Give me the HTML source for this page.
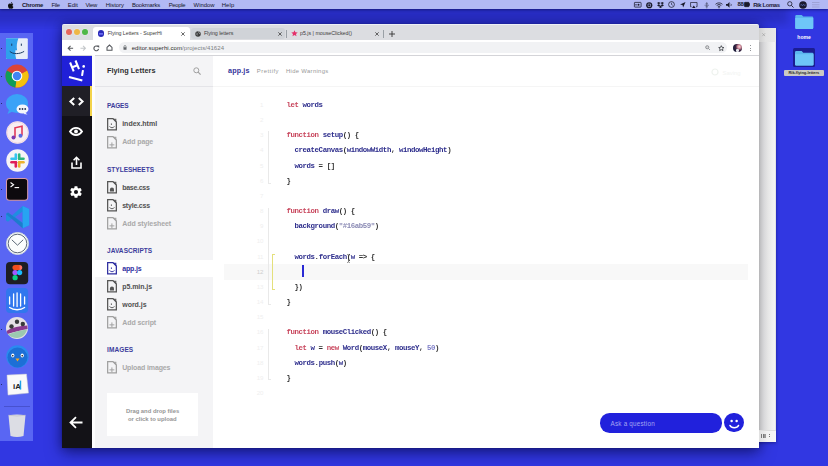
<!DOCTYPE html>
<html><head><meta charset="utf-8">
<style>
*{margin:0;padding:0;box-sizing:border-box}
html,body{width:828px;height:466px;overflow:hidden}
body{position:relative;background:#3137e2;font-family:"Liberation Sans",sans-serif}
.a{position:absolute}
.t{position:absolute;white-space:nowrap}
svg{position:absolute;overflow:visible}
.mb{left:0;top:0;width:828px;height:9px;background:#b2b9f4;box-shadow:0 1px 3px rgba(0,0,50,.5)}
.mt{top:0;font-size:6.2px;line-height:9px;color:#15152a}
.dock{left:0;top:33px;width:33px;height:408px;background:#5966f3}
.win2{left:745px;top:27.5px;width:30.7px;height:414.4px;background:linear-gradient(90deg,#b4b4b6 0,#b4b4b6 14px,#c6c6c8 16px,#d8d8da 19px,#e6e6e6 23px,#efefef 27px,#f4f4f4 30px,#dcdcdc 30.7px);box-shadow:0 1px 3px rgba(0,0,40,.4)}
.winsh{left:62px;top:24px;width:697px;height:424px;border-radius:2px;box-shadow:0 5px 16px rgba(0,0,50,.5),0 0 10px rgba(0,0,50,.3),0 0 1px rgba(0,0,0,.5)}
.tabs{left:62px;top:24px;width:697px;height:16px;background:#dcdde1;border-top:.8px solid #eef0f6;border-radius:2px 2px 0 0}
.tb{left:62px;top:40px;width:697px;height:15px;background:#fff}
.nav{left:62px;top:55px;width:30px;height:393px;background:#131217}
.logo{left:62px;top:55px;width:30px;height:31px;background:#2020d8}
.files{left:92px;top:55px;width:121.2px;height:393px;background:#f4f4f6}
.ed{left:213.2px;top:55px;width:545.8px;height:393px;background:#fff}
.mono{position:absolute;font-family:"Liberation Mono",monospace;font-weight:bold;font-size:7.4px;letter-spacing:-.42px;transform:scaleY(1.06);transform-origin:0 5px;line-height:10px;white-space:pre;color:#333}
.k{color:#c8455c}.v{color:#2d2d8c}.s{color:#8a8ab4}.n{color:#7f7fc8}
.ln{position:absolute;left:248.3px;width:15px;text-align:right;font-family:"Liberation Sans",sans-serif;font-size:6.2px;line-height:10px;color:#efefef;letter-spacing:-.2px}
.sec{position:absolute;font-size:5.9px;line-height:8px;font-weight:bold;color:#3c3c9c;letter-spacing:.25px;white-space:nowrap}
.fn{position:absolute;font-size:7px;line-height:10px;font-weight:bold;color:#4e4e4e;white-space:nowrap}
.fa{color:#a8a8a8}
.tabt{position:absolute;font-size:5.3px;line-height:8px;color:#3a3a3a;white-space:nowrap}
</style></head><body>

<div class="a mb"></div>
<svg style="left:8.3px;top:1.6px" width="5.6" height="6.6" viewBox="0 0 14 17"><path d="M11.6 9c0-2.2 1.8-3.2 1.9-3.3-1-1.5-2.6-1.7-3.2-1.7-1.4-.1-2.6.8-3.3.8-.7 0-1.7-.8-2.8-.8C2.7 4 1.3 4.9.5 6.3c-1.5 2.7-.4 6.7 1.1 8.9.7 1.1 1.6 2.3 2.7 2.2 1.1 0 1.5-.7 2.8-.7 1.3 0 1.7.7 2.8.7 1.2 0 1.9-1.100 2.6-2.100.8-1.2 1.2-2.4 1.2-2.5 0 0-2.3-.9-2.3-3.5zM9.5 2.7C10.1 2 10.5 1 10.4 0 9.5 0 8.5.6 7.9 1.3 7.3 1.9 6.8 2.9 7 3.9c1 .1 1.9-.5 2.5-1.2z" fill="#111"/></svg>
<div class="t" style="left:21.90px;top:-0.40px;font-size:5.9px;line-height:10px;letter-spacing:-0.160px;color:#15152a;font-weight:bold;">Chrome</div>
<div class="t" style="left:51.40px;top:-0.40px;font-size:5.9px;line-height:10px;letter-spacing:-0.300px;color:#15152a;">File</div>
<div class="t" style="left:67.80px;top:-0.40px;font-size:5.9px;line-height:10px;letter-spacing:0.008px;color:#15152a;">Edit</div>
<div class="t" style="left:85.50px;top:-0.40px;font-size:5.9px;line-height:10px;letter-spacing:-0.262px;color:#15152a;">View</div>
<div class="t" style="left:105.80px;top:-0.40px;font-size:5.9px;line-height:10px;letter-spacing:-0.025px;color:#15152a;">History</div>
<div class="t" style="left:131.90px;top:-0.40px;font-size:5.9px;line-height:10px;letter-spacing:-0.137px;color:#15152a;">Bookmarks</div>
<div class="t" style="left:168.70px;top:-0.40px;font-size:5.9px;line-height:10px;letter-spacing:-0.316px;color:#15152a;">People</div>
<div class="t" style="left:193.60px;top:-0.40px;font-size:5.9px;line-height:10px;letter-spacing:-0.021px;color:#15152a;">Window</div>
<div class="t" style="left:221.70px;top:-0.40px;font-size:5.9px;line-height:10px;letter-spacing:0.125px;color:#15152a;">Help</div>
<div class="t" style="left:753.20px;top:-0.40px;font-size:5.9px;line-height:10px;letter-spacing:-0.378px;color:#22223a;font-weight:bold;">Rik Lomas</div>
<svg style="left:633.5px;top:1.8px" width="7.5" height="5.5" viewBox="0 0 15 11"><rect x=".8" y=".8" width="13.4" height="9.4" rx="1" stroke="#1a1a2a" stroke-width="1.5" fill="none"/><circle cx="9" cy="5.5" r="2" fill="#1a1a2a"/><rect x="3" y="4" width="2" height="3" fill="#1a1a2a"/></svg>
<svg style="left:646px;top:1.5px" width="6.5" height="6.5" viewBox="0 0 13 13"><circle cx="6.5" cy="6.5" r="6.2" fill="#1a1a2a"/><path d="M4 4h5v5H4z" stroke="#b2b9f4" stroke-width="1.2" fill="none"/></svg>
<svg style="left:656.8px;top:1.5px" width="7" height="6.5" viewBox="0 0 14 13"><path d="M3.5 0L7 2.2 3.5 4.4 0 2.2zM10.5 0L14 2.2 10.5 4.4 7 2.2zM3.5 4.4L7 6.6 3.5 8.8 0 6.6zM10.5 4.4L14 6.6 10.5 8.8 7 6.6zM3.5 9.8L7 7.6l3.5 2.2L7 12z" fill="#1a1a2a"/></svg>
<svg style="left:668px;top:1.3px" width="7" height="7" viewBox="0 0 14 14"><circle cx="7" cy="7" r="5.8" stroke="#1a1a2a" stroke-width="1.5" fill="none"/><path d="M7 3.5V7l2.5 1.5" stroke="#1a1a2a" stroke-width="1.3" fill="none"/></svg>
<svg style="left:679.5px;top:2px" width="5.5" height="5.5" viewBox="0 0 11 11"><path d="M11 0L0 4.8l5 1.2L6.2 11z" fill="#1a1a2a"/></svg>
<svg style="left:689.8px;top:1.5px" width="7.6" height="6.5" viewBox="0 0 15 13"><path d="M3 9.5H1V1h13v8.5h-2" stroke="#1a1a2a" stroke-width="1.4" fill="none"/><path d="M7.5 7L11 12H4z" fill="#1a1a2a"/></svg>
<svg style="left:704px;top:1.5px" width="5.5" height="6.5" viewBox="0 0 11 13"><path d="M5.5 0v13M1 6.5h9M3 3.5h5M3 9.5h5" stroke="#1a1a2a" stroke-width="1" fill="none" opacity=".8"/></svg>
<svg style="left:714.8px;top:1.5px" width="8" height="6.2" viewBox="0 0 16 12.4"><path d="M1 4.6a10 10 0 0 1 14 0M3.4 7a6.6 6.6 0 0 1 9.2 0M5.7 9.3a3.3 3.3 0 0 1 4.6 0" stroke="#1a1a2a" stroke-width="1.6" fill="none"/><circle cx="8" cy="11.3" r="1.1" fill="#1a1a2a"/></svg>
<svg style="left:726px;top:1.8px" width="7.5" height="5.8" viewBox="0 0 15 11.5"><path d="M0 4h3l4-4v11.5l-4-4H0z" fill="#1a1a2a"/><path d="M9.5 3.5a3 3 0 0 1 0 4.5" stroke="#1a1a2a" stroke-width="1.3" fill="none"/></svg>
<div class="t" style="left:737.5px;top:0;font-size:6px;line-height:9px;font-weight:bold;color:#1a1a2a;letter-spacing:-.3px">88</div>
<svg style="left:744px;top:2px" width="6" height="5" viewBox="0 0 12 10"><rect x=".7" y=".7" width="9.6" height="8.6" rx="1.5" stroke="#1a1a2a" stroke-width="1.4" fill="#1a1a2a"/><rect x="10.5" y="3" width="1.5" height="4" fill="#1a1a2a"/></svg>
<svg style="left:786.5px;top:1.3px" width="7" height="7" viewBox="0 0 14 14"><circle cx="5.6" cy="5.6" r="4.3" stroke="#1a1a2a" stroke-width="1.6" fill="none"/><path d="M8.8 8.8L13 13" stroke="#1a1a2a" stroke-width="1.8"/></svg>
<svg style="left:799px;top:0.8px" width="8" height="8" viewBox="0 0 16 16"><circle cx="8" cy="8" r="7.6" fill="#1a1a2e"/><path d="M3 8c2-3 3 3 5 0s3 3 5 0" stroke="#7a9aff" stroke-width="1.3" fill="none"/></svg>
<svg style="left:811.5px;top:1.8px" width="7.5" height="5.5" viewBox="0 0 15 11"><path d="M0 1h15M0 5.5h15M0 10h15" stroke="#9598c8" stroke-width="1.4"/></svg>
<div class="a dock"></div>
<svg style="left:6.2px;top:37.8px" width="21.8" height="21.2" viewBox="0 0 22 21"><rect x="0" y="0" width="22" height="21" rx="1" fill="#e8eef8"/><path d="M1 0H12.5C11 4 10.5 8 11.2 12.2H9.5C9.2 15.5 9.6 18.5 10.3 21H1Q0 21 0 20V1Q0 0 1 0z" fill="#2fa0ec"/><path d="M5.8 5.5v2.2M15.5 5.5v2.2" stroke="#1a3a60" stroke-width="1"/><path d="M3.8 13.3c3 3 10 3 14.5 0" stroke="#1a3a60" stroke-width="1" fill="none"/></svg>
<div class="a" style="left:.9px;top:47.9px;width:1.2px;height:1.2px;border-radius:50%;background:#111a40"></div>
<svg style="left:5.4px;top:64.3px" width="24" height="24" viewBox="0 0 24 24"><circle cx="12" cy="12" r="11.5" fill="#db4437"/><path d="M12 12L1.9 6.5A11.5 11.5 0 0 0 10.5 23.4z" fill="#0f9d58"/><path d="M12 12L10.5 23.4A11.5 11.5 0 0 0 22.1 6.5z" fill="#f4c20d"/><path d="M12 12L22.1 6.5H12z" fill="#db4437"/><circle cx="12" cy="12" r="5.3" fill="#fff"/><circle cx="12" cy="12" r="4.2" fill="#4285f4"/></svg>
<div class="a" style="left:.9px;top:76.2px;width:1.2px;height:1.2px;border-radius:50%;background:#111a40"></div>
<svg style="left:5.5px;top:93.5px" width="22" height="22" viewBox="0 0 22 22"><ellipse cx="11" cy="9.5" rx="11" ry="9.5" fill="#3aa2f7"/><path d="M3 16l-1.5 4 5-2.5z" fill="#3aa2f7"/><ellipse cx="16.5" cy="15" rx="6" ry="4.5" fill="#f4f6fb"/><path d="M19 18.5l2.5 2-4-.6z" fill="#f4f6fb"/><circle cx="13.8" cy="15" r=".9" fill="#2a3550"/><circle cx="16.5" cy="15" r=".9" fill="#2a3550"/><circle cx="19.2" cy="15" r=".9" fill="#2a3550"/></svg>
<div class="a" style="left:.9px;top:103.1px;width:1.2px;height:1.2px;border-radius:50%;background:#111a40"></div>
<svg style="left:5.5px;top:121.4px" width="23" height="23" viewBox="0 0 23 23"><circle cx="11.5" cy="11.5" r="11.2" fill="#f7eef2"/><circle cx="11.5" cy="11.5" r="10.5" fill="none" stroke="#f0d0da" stroke-width=".8"/><path d="M9 16.5V6.8l7-1.6v9.3" stroke="#e03a5a" stroke-width="1.6" fill="none"/><circle cx="7.5" cy="16.5" r="2" fill="#7a3ab0"/><circle cx="14.5" cy="14.8" r="2" fill="#5a6adf"/></svg>
<svg style="left:5.5px;top:148.8px" width="23" height="23" viewBox="0 0 23 23"><circle cx="11.5" cy="11.5" r="11.2" fill="#f6f4f6"/><g stroke-width="2.6" stroke-linecap="round"><path d="M9.8 5.5v4.3" stroke="#36c5f0"/><path d="M5.5 9.8h4.3" stroke="#36c5f0"/><path d="M13.2 5.5v4.3" stroke="#2eb67d"/><path d="M17.5 9.8h-4.3" stroke="#2eb67d"/><path d="M13.2 17.5v-4.3" stroke="#ecb22e"/><path d="M17.5 13.2h-4.3" stroke="#ecb22e"/><path d="M9.8 17.5v-4.3" stroke="#e01e5a"/><path d="M5.5 13.2h4.3" stroke="#e01e5a"/></g></svg>
<svg style="left:5.8px;top:178.1px" width="22.2" height="22.8" viewBox="0 0 22 22.6"><rect x=".5" y=".5" width="21" height="21.6" rx="3" fill="#0d0a0e" stroke="#d89aa8" stroke-width="1"/><path d="M4.5 4.5l3 2.2-3 2.2" stroke="#fff" stroke-width="1.1" fill="none"/><path d="M8.5 9.5h4.5" stroke="#fff" stroke-width="1.1"/></svg>
<div class="a" style="left:.9px;top:188.7px;width:1.2px;height:1.2px;border-radius:50%;background:#111a40"></div>
<svg style="left:5.8px;top:205.7px" width="23.2" height="22.2" viewBox="0 0 23 22"><path d="M16.5 0L23 3V19L16.5 22L6 12.5 2 15.5 0 14.3V7.7L2 6.5 6 9.5z" fill="#1f8ee0"/><path d="M16.5 5.5L9 11l7.5 5.5z" fill="#5966f3"/><path d="M16.5 0L23 3V19L16.5 22z" fill="#27a4f2"/><path d="M2 6.5L16.5 17V22L0 8z" fill="#1a6fc0" opacity=".6"/></svg>
<div class="a" style="left:.9px;top:215.7px;width:1.2px;height:1.2px;border-radius:50%;background:#111a40"></div>
<svg style="left:5.5px;top:231.9px" width="23" height="23" viewBox="0 0 23 23"><circle cx="11.5" cy="11.5" r="11" fill="#fbfdfd" stroke="#cdd6dc" stroke-width="1"/><circle cx="11.5" cy="11.5" r="9.3" fill="none" stroke="#5d6a78" stroke-width="1"/><path d="M5.8 7.8L11.5 13.2 17.2 7.8" stroke="#5d6a78" stroke-width="1" fill="none"/></svg>
<svg style="left:5.8px;top:261.8px" width="22.2" height="22.2" viewBox="0 0 22 22"><rect width="22" height="22" rx="4" fill="#1e1e24"/><circle cx="9" cy="5.5" r="2.6" fill="#f24e1e"/><circle cx="13.5" cy="5.5" r="2.6" fill="#ff7262"/><path d="M9 2.9h4.5v5.2H9z" fill="#f24e1e"/><circle cx="9" cy="10.5" r="2.6" fill="#a259ff"/><circle cx="13.5" cy="10.5" r="2.6" fill="#1abcfe"/><circle cx="9" cy="15.5" r="2.6" fill="#0acf83"/></svg>
<svg style="left:5.8px;top:287.8px" width="22.2" height="25" viewBox="0 0 22 25"><rect width="22" height="25" rx="4" fill="#3177ee"/><g stroke="#fff" stroke-width="1.3" stroke-linecap="round"><path d="M3.5 9v7M7.5 6v12M11 5v13.5M14.5 6v12M18.5 9v7"/><path d="M3.5 19.5c4 3 11 3 15 0" fill="none"/></g></svg>
<svg style="left:6px;top:316.5px" width="22" height="22" viewBox="0 0 22 22"><circle cx="11" cy="11" r="11" fill="#e6e1e6"/><path d="M0.6 14C6 10 14 9 21.4 8.5L21.6 12C15 13 8 15 1.5 17z" fill="#8a3a8f"/><path d="M2 17.5C8 15 15 13 21 12.5 20 17 16 21 11 21 7 21 4 19.5 2 17.5z" fill="#9cc8b0"/><circle cx="11" cy="4.8" r="2.2" fill="#3a3a3a"/><circle cx="16.8" cy="7" r="2.2" fill="#3a3a3a"/><circle cx="5.5" cy="9.5" r="2.2" fill="#3a3a3a"/></svg>
<div class="a" style="left:.9px;top:328.9px;width:1.2px;height:1.2px;border-radius:50%;background:#111a40"></div>
<svg style="left:5.5px;top:345px" width="23" height="23" viewBox="0 0 23 23"><circle cx="11.5" cy="11.5" r="11.2" fill="#2a8af0"/><circle cx="11.5" cy="12.5" r="10" fill="#1d6fd6"/><ellipse cx="6.8" cy="10.5" rx="1.6" ry="2" fill="#fff"/><ellipse cx="16.2" cy="10.5" rx="1.6" ry="2" fill="#fff"/><circle cx="6.8" cy="10.8" r=".8" fill="#111"/><circle cx="16.2" cy="10.8" r=".8" fill="#111"/><path d="M9.5 13.5h4l-2 3z" fill="#f5a623"/></svg>
<svg style="left:5.4px;top:373.9px" width="24" height="21.2" viewBox="0 0 24 21"><path d="M2 1L21.5 0 23.5 19 3 21z" fill="#fafafa" stroke="#c8c8d0" stroke-width=".5"/><text x="8" y="14.5" font-family="Liberation Sans" font-weight="bold" font-size="8" fill="#222">iA</text><path d="M15.5 6.5v9" stroke="#1ea0e6" stroke-width="1.4"/></svg>
<div class="a" style="left:.9px;top:384.3px;width:1.2px;height:1.2px;border-radius:50%;background:#111a40"></div>
<div class="a" style="left:3.5px;top:405.5px;width:26px;height:.6px;background:rgba(20,20,100,.25)"></div>
<svg style="left:7.5px;top:414px" width="18" height="23.5" viewBox="0 0 18 23.5"><path d="M.5 1.2Q9-.4 17.5 1.2L15.5 22Q9 24 2.5 22z" fill="#dcdde4"/><path d="M.5 1.2Q9 2.8 17.5 1.2" stroke="#b8b9c2" stroke-width=".6" fill="none"/></svg>
<div class="a" style="left:0;top:9px;width:828px;height:20px;overflow:hidden"><div class="a" style="left:-10px;top:-4px;width:798px;height:19px;background:rgba(0,0,50,.17);filter:blur(4px)"></div></div>
<div class="a winsh"></div>
<div class="a win2"></div>
<div class="a" style="left:759px;top:27.5px;width:16.7px;height:14.5px;background:linear-gradient(90deg,#cfcfcf,#e2e2e2 40%,#e8e8e8)"></div>
<svg style="left:762.3px;top:33px" width="3.4" height="3.4" viewBox="0 0 4 4"><path d="M.3.3L3.7 3.7M3.7.3L.3 3.7" stroke="#999" stroke-width=".7"/></svg>
<div class="a" style="left:759px;top:429.8px;width:16.7px;height:12px;background:linear-gradient(90deg,#e0e0e0,#f2f2f2 50%,#f6f6f6);border-top:.5px solid #ddd"></div>
<div class="a" style="left:761px;top:433.5px;width:1px;height:4px;background:#777"></div><div class="a" style="left:762.6px;top:433.5px;width:1px;height:4px;background:#777"></div><div class="a" style="left:764.2px;top:433.5px;width:1.6px;height:4px;background:#999"></div><div class="a" style="left:768.5px;top:434.3px;width:.8px;height:.8px;background:#777"></div><div class="a" style="left:768.5px;top:436.3px;width:.8px;height:.8px;background:#777"></div>
<div class="a tabs"></div>
<div class="a tb"></div>
<div class="a nav"></div>
<div class="a logo"></div>
<div class="a files"></div>
<div class="a ed"></div>
<div class="a" style="left:66.00px;top:29.00px;width:5.8px;height:5.8px;border-radius:50%;background:#e5675c;box-shadow:0 0 0 .5px rgba(255,255,255,.35)"></div>
<div class="a" style="left:74.40px;top:29.00px;width:5.8px;height:5.8px;border-radius:50%;background:#eeb746;box-shadow:0 0 0 .5px rgba(255,255,255,.35)"></div>
<div class="a" style="left:82.30px;top:29.00px;width:5.8px;height:5.8px;border-radius:50%;background:#4fb848;box-shadow:0 0 0 .5px rgba(255,255,255,.35)"></div>
<div class="a" style="left:93px;top:27px;width:97px;height:13px;background:#fff;border-radius:3px 3px 0 0"></div>
<div class="a" style="left:97.8px;top:30.4px;width:6.4px;height:6.4px;border-radius:50%;background:#2a2ab8"></div>
<div class="a" style="left:99.2px;top:32.8px;width:3.6px;height:.6px;background:#6a6af0"></div><div class="a" style="left:99.2px;top:34.3px;width:3.6px;height:.6px;background:#5a5ae0"></div>
<div class="t" style="left:107.70px;top:28.40px;font-size:5.3px;line-height:10px;letter-spacing:-0.060px;color:#3c3c3c;">Flying Letters - SuperHi</div>
<div class="a" style="left:191px;top:27.5px;width:94px;height:11.5px;background:#d0d3d8;border-radius:3px"></div>
<svg style="left:195.2px;top:30.6px" width="6" height="6" viewBox="0 0 12 12"><circle cx="6" cy="6" r="5.5" fill="#3c3c3c"/><path d="M3 3.5c1 .5 1.5 1.5 1 2.5s.5 2 1.5 2.5M7 1.2c-.5 1 .3 1.8 1.2 2s1.2 1.2.8 2.2" stroke="#d0d3d8" stroke-width="1.3" fill="none"/></svg>
<div class="t" style="left:203.90px;top:28.40px;font-size:5.3px;line-height:10px;letter-spacing:-0.042px;color:#3c3c3c;">Flying letters</div>
<div class="a" style="left:286px;top:29.5px;width:.8px;height:8px;background:#9aa0a6"></div>
<svg style="left:290.5px;top:30.3px" width="7" height="7" viewBox="0 0 24 24"><path d="M12 1l3.2 7.1 7.8.7-5.9 5.1 1.8 7.6L12 17.5 5.1 21.5l1.8-7.6L1 8.8l7.8-.7z" fill="#e5306a"/></svg>
<div class="t" style="left:300.00px;top:28.40px;font-size:5.3px;line-height:10px;letter-spacing:-0.016px;color:#3c3c3c;">p5.js | mouseClicked()</div>
<div class="a" style="left:383px;top:29.5px;width:.8px;height:8px;background:#9aa0a6"></div>
<svg style="left:181.2px;top:31.5px" width="4" height="4" viewBox="0 0 4 4"><path d="M.3.3L3.7 3.7M3.7.3L.3 3.7" stroke="#444" stroke-width=".8"/></svg>
<svg style="left:278.0px;top:31.5px" width="4" height="4" viewBox="0 0 4 4"><path d="M.3.3L3.7 3.7M3.7.3L.3 3.7" stroke="#444" stroke-width=".8"/></svg>
<svg style="left:375.0px;top:31.5px" width="4" height="4" viewBox="0 0 4 4"><path d="M.3.3L3.7 3.7M3.7.3L.3 3.7" stroke="#444" stroke-width=".8"/></svg>
<svg style="left:389px;top:30.5px" width="6" height="6" viewBox="0 0 6 6"><path d="M3 0V6M0 3H6" stroke="#333" stroke-width=".9"/></svg>
<svg style="left:67.3px;top:44.6px" width="6.6" height="6.6" viewBox="0 0 14 14"><path d="M13 7H2.5M7.5 2L2.5 7l5 5" stroke="#54575c" stroke-width="2.3" fill="none"/></svg>
<svg style="left:80.3px;top:44.6px" width="6.6" height="6.6" viewBox="0 0 14 14"><path d="M1 7h10.5M6.5 2l5 5-5 5" stroke="#c4c7ca" stroke-width="2.3" fill="none"/></svg>
<svg style="left:93px;top:44.6px" width="6.6" height="6.6" viewBox="0 0 14 14"><path d="M11.8 8.3A5 5 0 1 1 10.2 3.3" stroke="#54575c" stroke-width="2.4" fill="none"/><path d="M7.8.8h5.4v5.4z" fill="#54575c"/></svg>
<svg style="left:105.5px;top:44.4px" width="7" height="7" viewBox="0 0 14 14"><path d="M2 6.8L7 2l5 4.8V12.6H2z" stroke="#54575c" stroke-width="2.1" fill="none" stroke-linejoin="miter"/></svg>
<div class="a" style="left:118.8px;top:42px;width:608px;height:10.9px;border-radius:5.45px;background:#f1f2f4"></div>
<svg style="left:123.3px;top:44.6px" width="4" height="5" viewBox="0 0 8 10"><path d="M2 4.5V3a2 2 0 0 1 4 0v1.5" stroke="#5f6368" stroke-width="1.3" fill="none"/><rect x="1" y="4.5" width="6" height="5" rx=".5" fill="#5f6368"/></svg>
<div class="t" style="left:131.70px;top:42.60px;font-size:6.0px;line-height:10px;letter-spacing:0.070px;color:#2a2a2a;">editor.superhi.com<span style="color:#7c7f83">/projects/41624</span></div>
<svg style="left:705.3px;top:45.3px" width="5.4" height="5.4" viewBox="0 0 12 12"><circle cx="5" cy="5" r="3.5" stroke="#8a8d91" stroke-width="2" fill="#d8d8da"/><path d="M7.6 7.6L11 11" stroke="#8a8d91" stroke-width="2"/></svg>
<svg style="left:717.6px;top:44.6px" width="6.6" height="6.6" viewBox="0 0 24 24"><path d="M12 2.5l2.8 6.2 6.7.6-5.1 4.5 1.6 6.6L12 16.9l-6 3.5 1.6-6.6-5.1-4.5 6.7-.6z" stroke="#3c3f44" stroke-width="3" fill="none" stroke-linejoin="round"/></svg>
<div class="a" style="left:733px;top:43.5px;width:8.6px;height:8.6px;border-radius:50%;background:radial-gradient(circle at 70% 35%,#f3dde0 0,#d08a98 22%,#3a2340 45%,#1c1c3a 70%);overflow:hidden"><div class="a" style="left:3.2px;top:5.8px;width:2.4px;height:3px;border-radius:40%;background:#e8e8ee"></div></div>
<div class="a" style="left:749.7px;top:45.4px;width:1px;height:1px;border-radius:50%;background:#6f7378"></div>
<div class="a" style="left:749.7px;top:47.5px;width:1px;height:1px;border-radius:50%;background:#6f7378"></div>
<div class="a" style="left:749.7px;top:49.6px;width:1px;height:1px;border-radius:50%;background:#6f7378"></div>
<div class="a" style="left:62px;top:54.6px;width:697px;height:.6px;background:#d4d4d8"></div>
<div class="a" style="left:62px;top:86px;width:30px;height:30px;background:#201f26"></div>
<div class="a" style="left:89.6px;top:86px;width:2.8px;height:30px;background:#f3d34a"></div>
<div class="a" style="left:92.4px;top:55px;width:3px;height:393px;background:#fdfdfe"></div>
<svg style="left:62px;top:55px" width="30" height="31" viewBox="0 0 30 31"><g stroke="#fff" stroke-width="2.05" stroke-linecap="butt" fill="none"><path d="M8.1 7.5L11.7 16.3M13.5 5.5L17 14.1M9.7 12.5L15.4 10.2"/><path d="M21 15.1L20 20.9" /><path d="M7 22L20.3 25.6"/></g><circle cx="21.7" cy="11.4" r="1.3" fill="#fff"/></svg>
<svg style="left:68.5px;top:96.5px" width="15" height="9" viewBox="0 0 15 9"><path d="M5.2 .9L1.4 4.5 5.2 8.1M9.8 .9l3.8 3.6-3.8 3.6" stroke="#fff" stroke-width="2" fill="none" stroke-linejoin="miter"/></svg>
<svg style="left:68.8px;top:126.5px" width="14" height="9" viewBox="0 0 14 9"><path d="M1 4.5C2.7 1.9 4.6.9 7 .9s4.3 1 6 3.6C11.3 7.1 9.4 8.1 7 8.1S2.7 7.1 1 4.5z" stroke="#fff" stroke-width="1.9" fill="none"/><circle cx="7" cy="4.5" r="1.9" fill="#fff"/></svg>
<svg style="left:70.5px;top:155.5px" width="11" height="13" viewBox="0 0 11 13"><path d="M1 6.5V12H10V6.5" stroke="#fff" stroke-width="1.6" fill="none"/><path d="M5.5 9V1.5M2.6 4.2L5.5 1.3 8.4 4.2" stroke="#fff" stroke-width="1.6" fill="none"/></svg>
<svg style="left:68.8px;top:185px" width="14" height="14" viewBox="0 0 24 24"><path fill="#fff" d="M19.4 13c.04-.3.06-.6.06-1s-.02-.7-.06-1l2.1-1.6c.2-.15.25-.42.12-.64l-2-3.46c-.12-.22-.4-.3-.6-.22l-2.5 1c-.52-.4-1.08-.73-1.7-.98l-.37-2.65A.49.49 0 0 0 14 2h-4c-.25 0-.46.18-.5.42l-.37 2.65c-.62.25-1.18.58-1.7.98l-2.5-1c-.23-.09-.48 0-.6.22l-2 3.46c-.13.22-.07.49.12.64L4.57 11c-.04.32-.07.65-.07 1s.03.68.07 1l-2.11 1.65c-.19.15-.24.42-.12.64l2 3.46c.12.22.39.3.61.22l2.49-1c.52.4 1.08.73 1.69.98l.38 2.65c.03.24.24.42.49.42h4c.25 0 .46-.18.49-.42l.38-2.65c.61-.25 1.17-.59 1.69-.98l2.49 1c.23.09.49 0 .61-.22l2-3.46c.12-.22.07-.49-.12-.64L19.4 13zM12 15.5a3.5 3.5 0 1 1 0-7 3.5 3.5 0 0 1 0 7z"/></svg>
<svg style="left:68.8px;top:416.3px" width="14" height="13" viewBox="0 0 14 13"><path d="M13.5 6.5H1.8M7 1.2L1.5 6.5 7 11.8" stroke="#fff" stroke-width="1.8" fill="none"/></svg>
<div class="a" style="left:95.4px;top:85.8px;width:117.8px;height:.8px;background:#e4e4e8"></div>
<div class="t" style="left:106.90px;top:65.60px;font-size:7.3px;line-height:10px;letter-spacing:0.058px;color:#2f2f2f;font-weight:bold;">Flying Letters</div>
<svg style="left:193px;top:67px" width="8" height="8" viewBox="0 0 8 8"><circle cx="3.3" cy="3.3" r="2.5" stroke="#a0a0a0" stroke-width="1" fill="none"/><path d="M5.2 5.2L7.6 7.6" stroke="#a0a0a0" stroke-width="1.2"/></svg>
<div class="t" style="left:107.00px;top:100.60px;font-size:6.5px;line-height:10px;letter-spacing:-0.166px;color:#3c3c9c;font-weight:bold;">PAGES</div>
<div class="t" style="left:107.00px;top:164.60px;font-size:6.5px;line-height:10px;letter-spacing:0.004px;color:#3c3c9c;font-weight:bold;">STYLESHEETS</div>
<div class="t" style="left:107.00px;top:246.00px;font-size:6.5px;line-height:10px;letter-spacing:0.064px;color:#3c3c9c;font-weight:bold;">JAVASCRIPTS</div>
<div class="t" style="left:107.00px;top:344.80px;font-size:6.5px;line-height:10px;letter-spacing:0.111px;color:#3c3c9c;font-weight:bold;">IMAGES</div>
<div class="a" style="left:92px;top:259.9px;width:121.2px;height:17.6px;background:#fff"></div>
<svg style="left:107px;top:117.60px" width="10" height="12.6" viewBox="0 0 10 12.6"><path d="M.65.65H5.9L9.35 4.1V11.95H.65z" stroke="#555" stroke-width="1.25" fill="none" stroke-linejoin="miter"/><path d="M5.6.65L9.35 4.4V.65z" fill="#555" opacity=".9"/><path d="M4.4 5.4v1.6" stroke="#555" stroke-width=".9" fill="none"/><path d="M2.6 8.3c.6 1.9 4.2 1.9 4.8 0" stroke="#555" stroke-width=".9" fill="none"/></svg>
<div class="t" style="left:122.20px;top:119.30px;font-size:7.0px;line-height:10px;letter-spacing:-0.011px;color:#505050;font-weight:bold;">index.html</div>
<svg style="left:107px;top:135.60px" width="10" height="12.6" viewBox="0 0 10 12.6"><path d="M.65.65H5.9L9.35 4.1V11.95H.65z" stroke="#a0a0a0" stroke-width="1.25" fill="none" stroke-linejoin="miter"/><path d="M5.6.65L9.35 4.4V.65z" fill="#a0a0a0" opacity=".9"/><path d="M4.9 6.4v4.9M2.45 8.85h4.9" stroke="#a0a0a0" stroke-width=".95"/></svg>
<div class="t" style="left:122.20px;top:137.30px;font-size:7.0px;line-height:10px;letter-spacing:-0.126px;color:#a9a9a9;font-weight:bold;">Add page</div>
<svg style="left:107px;top:181.00px" width="10" height="12.6" viewBox="0 0 10 12.6"><path d="M.65.65H5.9L9.35 4.1V11.95H.65z" stroke="#555" stroke-width="1.25" fill="none" stroke-linejoin="miter"/><path d="M5.6.65L9.35 4.4V.65z" fill="#555" opacity=".9"/><path d="M2.9 10.6V8.6a2.05 2.05 0 0 1 4.1 0v2z" fill="#555"/></svg>
<div class="t" style="left:122.20px;top:182.70px;font-size:7.0px;line-height:10px;letter-spacing:-0.282px;color:#505050;font-weight:bold;">base.css</div>
<svg style="left:107px;top:199.00px" width="10" height="12.6" viewBox="0 0 10 12.6"><path d="M.65.65H5.9L9.35 4.1V11.95H.65z" stroke="#555" stroke-width="1.25" fill="none" stroke-linejoin="miter"/><path d="M5.6.65L9.35 4.4V.65z" fill="#555" opacity=".9"/><path d="M4.4 5.4v1.6" stroke="#555" stroke-width=".9" fill="none"/><path d="M2.6 8.3c.6 1.9 4.2 1.9 4.8 0" stroke="#555" stroke-width=".9" fill="none"/></svg>
<div class="t" style="left:122.20px;top:200.70px;font-size:7.0px;line-height:10px;letter-spacing:-0.209px;color:#505050;font-weight:bold;">style.css</div>
<svg style="left:107px;top:217.00px" width="10" height="12.6" viewBox="0 0 10 12.6"><path d="M.65.65H5.9L9.35 4.1V11.95H.65z" stroke="#a0a0a0" stroke-width="1.25" fill="none" stroke-linejoin="miter"/><path d="M5.6.65L9.35 4.4V.65z" fill="#a0a0a0" opacity=".9"/><path d="M4.9 6.4v4.9M2.45 8.85h4.9" stroke="#a0a0a0" stroke-width=".95"/></svg>
<div class="t" style="left:122.20px;top:218.70px;font-size:7.0px;line-height:10px;letter-spacing:-0.062px;color:#a9a9a9;font-weight:bold;">Add stylesheet</div>
<svg style="left:107px;top:262.40px" width="10" height="12.6" viewBox="0 0 10 12.6"><path d="M.65.65H5.9L9.35 4.1V11.95H.65z" stroke="#2e2ea0" stroke-width="1.25" fill="none" stroke-linejoin="miter"/><path d="M5.6.65L9.35 4.4V.65z" fill="#2e2ea0" opacity=".9"/><path d="M4.4 5.4v1.6" stroke="#2e2ea0" stroke-width=".9" fill="none"/><path d="M2.6 8.3c.6 1.9 4.2 1.9 4.8 0" stroke="#2e2ea0" stroke-width=".9" fill="none"/></svg>
<div class="t" style="left:122.20px;top:264.10px;font-size:7.0px;line-height:10px;letter-spacing:-0.166px;color:#2e2ea0;font-weight:bold;">app.js</div>
<svg style="left:107px;top:280.20px" width="10" height="12.6" viewBox="0 0 10 12.6"><path d="M.65.65H5.9L9.35 4.1V11.95H.65z" stroke="#555" stroke-width="1.25" fill="none" stroke-linejoin="miter"/><path d="M5.6.65L9.35 4.4V.65z" fill="#555" opacity=".9"/><path d="M2.9 10.6V8.6a2.05 2.05 0 0 1 4.1 0v2z" fill="#555"/></svg>
<div class="t" style="left:122.20px;top:281.90px;font-size:7.0px;line-height:10px;letter-spacing:-0.056px;color:#505050;font-weight:bold;">p5.min.js</div>
<svg style="left:107px;top:298.00px" width="10" height="12.6" viewBox="0 0 10 12.6"><path d="M.65.65H5.9L9.35 4.1V11.95H.65z" stroke="#555" stroke-width="1.25" fill="none" stroke-linejoin="miter"/><path d="M5.6.65L9.35 4.4V.65z" fill="#555" opacity=".9"/><path d="M4.4 5.4v1.6" stroke="#555" stroke-width=".9" fill="none"/><path d="M2.6 8.3c.6 1.9 4.2 1.9 4.8 0" stroke="#555" stroke-width=".9" fill="none"/></svg>
<div class="t" style="left:122.23px;top:299.70px;font-size:7.0px;line-height:10px;letter-spacing:-0.023px;color:#505050;font-weight:bold;">word.js</div>
<svg style="left:107px;top:315.80px" width="10" height="12.6" viewBox="0 0 10 12.6"><path d="M.65.65H5.9L9.35 4.1V11.95H.65z" stroke="#a0a0a0" stroke-width="1.25" fill="none" stroke-linejoin="miter"/><path d="M5.6.65L9.35 4.4V.65z" fill="#a0a0a0" opacity=".9"/><path d="M4.9 6.4v4.9M2.45 8.85h4.9" stroke="#a0a0a0" stroke-width=".95"/></svg>
<div class="t" style="left:122.20px;top:317.50px;font-size:7.0px;line-height:10px;letter-spacing:-0.068px;color:#a9a9a9;font-weight:bold;">Add script</div>
<svg style="left:107px;top:361.40px" width="10" height="12.6" viewBox="0 0 10 12.6"><path d="M.65.65H5.9L9.35 4.1V11.95H.65z" stroke="#a0a0a0" stroke-width="1.25" fill="none" stroke-linejoin="miter"/><path d="M5.6.65L9.35 4.4V.65z" fill="#a0a0a0" opacity=".9"/><path d="M4.9 6.4v4.9M2.45 8.85h4.9" stroke="#a0a0a0" stroke-width=".95"/></svg>
<div class="t" style="left:122.20px;top:363.10px;font-size:7.0px;line-height:10px;letter-spacing:-0.125px;color:#a9a9a9;font-weight:bold;">Upload images</div>
<div class="a" style="left:107px;top:392.5px;width:91.3px;height:43.5px;background:#fff"></div>
<div class="t" style="left:125.90px;top:406.00px;font-size:5.9px;line-height:10px;letter-spacing:-0.019px;color:#959595;font-weight:bold;">Drag and drop files</div>
<div class="t" style="left:128.00px;top:414.30px;font-size:5.9px;line-height:10px;letter-spacing:-0.009px;color:#959595;font-weight:bold;">or click to upload</div>
<div class="a" style="left:213.2px;top:85.8px;width:545.8px;height:.8px;background:#f5f5f5"></div>
<div class="t" style="left:228.00px;top:65.70px;font-size:7.2px;line-height:10px;letter-spacing:0.138px;color:#34349a;font-weight:bold;">app.js</div>
<div class="t" style="left:256.80px;top:65.90px;font-size:5.9px;line-height:10px;letter-spacing:0.479px;color:#989898;">Prettify</div>
<div class="t" style="left:286.00px;top:65.90px;font-size:5.9px;line-height:10px;letter-spacing:0.319px;color:#989898;">Hide Warnings</div>
<svg style="left:710.5px;top:68.4px" width="8" height="8" viewBox="0 0 8 8"><circle cx="4" cy="4" r="3" stroke="#eef2ee" stroke-width="1.2" fill="none"/></svg>
<div class="t" style="left:722.6px;top:67.5px;font-size:5.9px;line-height:10px;color:#f2f4f2">Saving</div>
<div class="a" style="left:224px;top:264.2px;width:524px;height:15.4px;background:#f8f8f8"></div>
<div class="ln" style="top:100.00px;">1</div>
<div class="mono" style="left:286.5px;top:100.00px"><span class="k">let</span> <span class="v">words</span></div>
<div class="ln" style="top:115.16px;">2</div>
<div class="ln" style="top:130.32px;">3</div>
<div class="mono" style="left:286.5px;top:130.32px"><span class="k">function</span> <span class="v">setup</span>() {</div>
<div class="ln" style="top:145.48px;">4</div>
<div class="mono" style="left:286.5px;top:145.48px">  <span class="v">createCanvas</span>(<span class="v">windowWidth</span>, <span class="v">windowHeight</span>)</div>
<div class="ln" style="top:160.64px;">5</div>
<div class="mono" style="left:286.5px;top:160.64px">  <span class="v">words</span> = []</div>
<div class="ln" style="top:175.80px;">6</div>
<div class="mono" style="left:286.5px;top:175.80px">}</div>
<div class="ln" style="top:190.96px;">7</div>
<div class="ln" style="top:206.12px;">8</div>
<div class="mono" style="left:286.5px;top:206.12px"><span class="k">function</span> <span class="v">draw</span>() {</div>
<div class="ln" style="top:221.28px;">9</div>
<div class="mono" style="left:286.5px;top:221.28px">  <span class="v">background</span>(<span class="s">&quot;#16ab59&quot;</span>)</div>
<div class="ln" style="top:236.44px;">10</div>
<div class="ln" style="top:251.60px;">11</div>
<div class="mono" style="left:286.5px;top:251.60px">  <span class="v">words</span>.<span class="v">forEach</span>(<span class="v">w</span> =&gt; {</div>
<div class="ln" style="top:266.76px;color:#cfcfcf">12</div>
<div class="ln" style="top:281.92px;">13</div>
<div class="mono" style="left:286.5px;top:281.92px">  })</div>
<div class="ln" style="top:297.08px;">14</div>
<div class="mono" style="left:286.5px;top:297.08px">}</div>
<div class="ln" style="top:312.24px;">15</div>
<div class="ln" style="top:327.40px;">16</div>
<div class="mono" style="left:286.5px;top:327.40px"><span class="k">function</span> <span class="v">mouseClicked</span>() {</div>
<div class="ln" style="top:342.56px;">17</div>
<div class="mono" style="left:286.5px;top:342.56px">  <span class="k">let</span> <span class="v">w</span> = <span class="k">new</span> <span class="v">Word</span>(<span class="v">mouseX</span>, <span class="v">mouseY</span>, <span class="n">50</span>)</div>
<div class="ln" style="top:357.72px;">18</div>
<div class="mono" style="left:286.5px;top:357.72px">  <span class="v">words</span>.<span class="v">push</span>(<span class="v">w</span>)</div>
<div class="ln" style="top:372.88px;">19</div>
<div class="mono" style="left:286.5px;top:372.88px">}</div>
<div class="ln" style="top:388.04px;">20</div>
<div class="a" style="left:267.7px;top:131.40px;width:.9px;height:52.00px;background:#e9e9e9"></div>
<div class="a" style="left:267.7px;top:182.50px;width:3px;height:.9px;background:#e9e9e9"></div>
<div class="a" style="left:267.7px;top:207.50px;width:.9px;height:97.00px;background:#e9e9e9"></div>
<div class="a" style="left:267.7px;top:303.60px;width:3px;height:.9px;background:#e9e9e9"></div>
<div class="a" style="left:267.7px;top:328.50px;width:.9px;height:51.50px;background:#e9e9e9"></div>
<div class="a" style="left:267.7px;top:379.10px;width:3px;height:.9px;background:#e9e9e9"></div>
<div class="a" style="left:271.8px;top:253.5px;width:.9px;height:36px;background:#e4e07c"></div>
<div class="a" style="left:271.8px;top:253.5px;width:3.4px;height:.9px;background:#e4e07c"></div>
<div class="a" style="left:271.8px;top:288.7px;width:3.4px;height:.9px;background:#e4e07c"></div>
<div class="a" style="left:302.3px;top:265.4px;width:1.9px;height:12px;background:#2a2ad4"></div>
<svg style="left:347px;top:254px" width="3" height="9" viewBox="0 0 3 9"><path d="M.3.4c.6 0 1 .3 1.2.8M1.5 1.2v6.6M.3 8.6c.6 0 1-.3 1.2-.8M2.7.4c-.6 0-1 .3-1.2.8M2.7 8.6c-.6 0-1-.3-1.2-.8" stroke="#333" stroke-width=".6" fill="none"/></svg>
<div class="a" style="left:600.1px;top:413.3px;width:121.5px;height:19.3px;border-radius:9.65px;background:#2121dc"></div>
<div class="t" style="left:610.50px;top:419.20px;font-size:6.3px;line-height:10px;letter-spacing:0.221px;color:#a5a5f2;">Ask a question</div>
<div class="a" style="left:724.2px;top:412.5px;width:19.8px;height:19.8px;border-radius:50%;background:#2121dc"></div>
<svg style="left:724.2px;top:412.5px" width="20" height="20" viewBox="0 0 20 20"><circle cx="7.6" cy="8.1" r="1.25" fill="#fff"/><circle cx="12.6" cy="8.1" r="1.25" fill="#fff"/><path d="M5.9 12.4c1.6 3.2 7.1 3.2 8.7 0" stroke="#fff" stroke-width="1.4" fill="none" stroke-linecap="round"/></svg>
<svg style="left:795px;top:14.8px" width="18.5" height="14" viewBox="0 0 18 14"><path d="M0 1.2Q0 0 1.2 0H6.5L8 1.6H16.8Q18 1.6 18 2.8V12.8Q18 14 16.8 14H1.2Q0 14 0 12.8z" fill="#5cb6ee"/><path d="M0 3H18V12.8Q18 14 16.8 14H1.2Q0 14 0 12.8z" fill="#6ec6f8"/></svg>
<div class="t" style="left:784px;top:33px;width:40px;text-align:center;font-size:5px;line-height:8px;color:#fff;font-weight:bold">home</div>
<div class="a" style="left:793px;top:47.7px;width:21.6px;height:19.8px;background:rgba(10,10,80,.55);border-radius:1.5px"></div>
<svg style="left:795px;top:50.5px" width="18.5" height="14.5" viewBox="0 0 18 14"><path d="M0 1.2Q0 0 1.2 0H6.5L8 1.6H16.8Q18 1.6 18 2.8V12.8Q18 14 16.8 14H1.2Q0 14 0 12.8z" fill="#5cb6ee"/><path d="M0 3H18V12.8Q18 14 16.8 14H1.2Q0 14 0 12.8z" fill="#6ec6f8"/></svg>
<div class="a" style="left:784px;top:70px;width:39.7px;height:5.8px;background:#cacac4;border-radius:1px"></div>
<div class="t" style="left:784px;top:69.4px;width:39.7px;text-align:center;font-size:4px;line-height:7px;color:#2a2a2a;font-weight:bold;letter-spacing:-.05px">Rik-flying-letters</div>
</body></html>
